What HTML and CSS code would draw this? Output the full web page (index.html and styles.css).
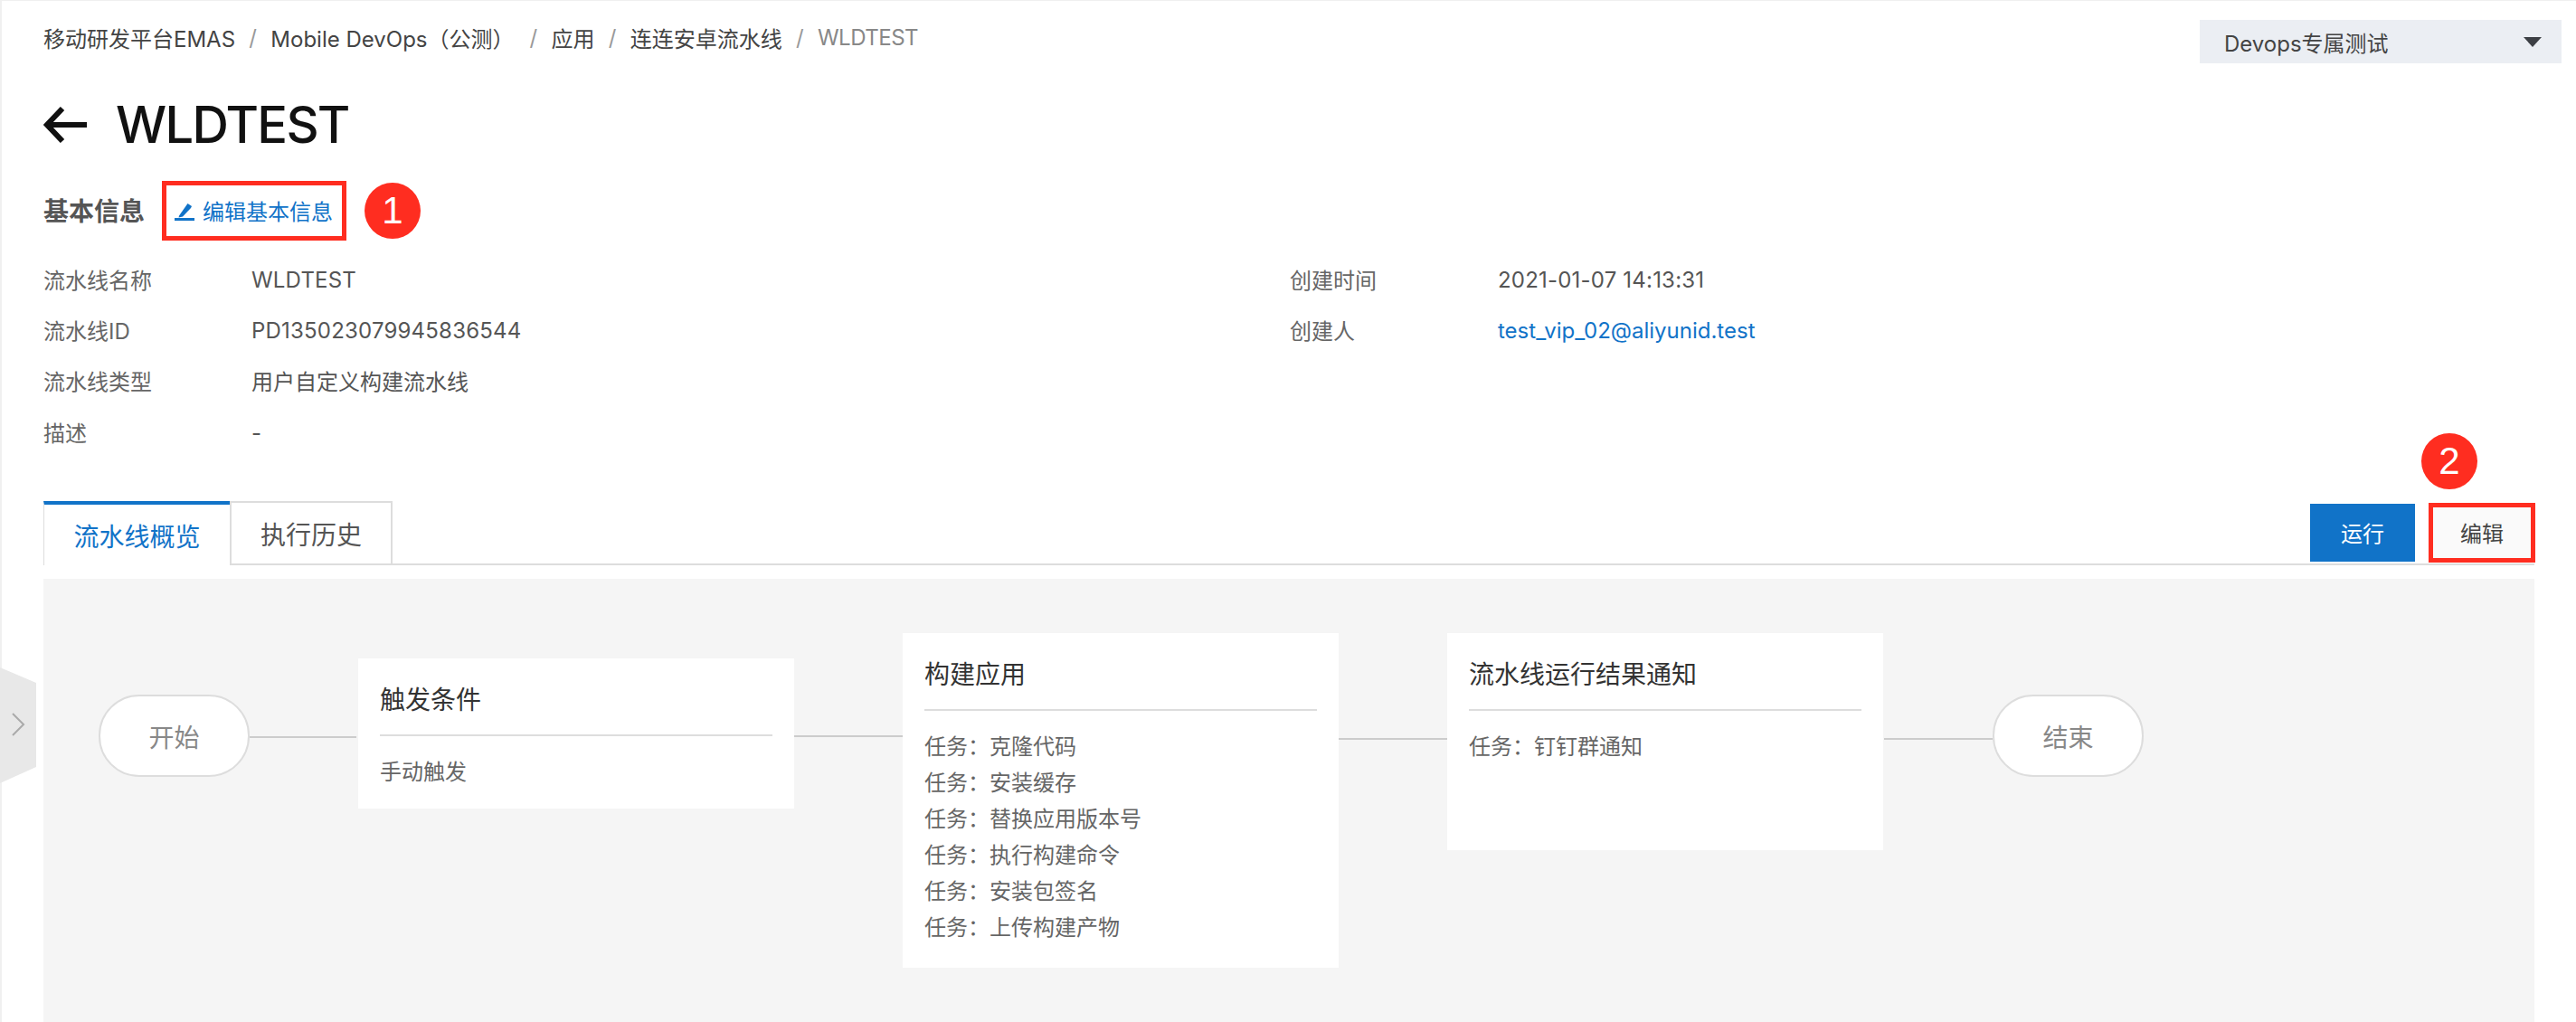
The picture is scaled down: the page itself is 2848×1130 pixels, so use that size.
FILE: index.html
```html
<!DOCTYPE html>
<html lang="zh">
<head>
<meta charset="utf-8">
<title>WLDTEST</title>
<link rel="stylesheet" href="styles.css">
</head>
<body>
<div class="page">
  <div class="side-handle"><svg class="side-chevron" width="16" height="26" viewBox="0 0 16 26"><path d="M2 1l12 12L2 25" fill="none" stroke="#aaa" stroke-width="2"/></svg></div>
  <header class="topbar">
    <nav class="crumbs">
      <span>移动研发平台EMAS</span><i>/</i><span>Mobile DevOps（公测）</span><i class="wide">/</i><span>应用</span><i>/</i><span>连连安卓流水线</span><i>/</i><span class="current">WLDTEST</span>
    </nav>
    <div class="select"><span>Devops专属测试</span><b class="caret"></b></div>
  </header>
  <h1 class="title">
    <svg class="back" width="48" height="40" viewBox="0 0 48 40"><path d="M21 2L4 20l17 18M4 20h44" fill="none" stroke="#111" stroke-width="6"/></svg>
    <span>WLDTEST</span>
  </h1>
  <div class="basic">
    <strong>基本信息</strong>
    <a class="edit-link">
      <svg width="22" height="21" viewBox="0 0 22 21"><path d="M5 15.500L14.500 2 19 5l-1 2-9 9.500-4.500 1z" fill="#1173c8"/><path d="M0 19.500h22" stroke="#1173c8" stroke-width="3"/></svg>
      <span>编辑基本信息</span>
    </a>
    <em class="badge">1</em>
  </div>
  <section class="info">
    <div class="info-col">
      <div class="row"><label>流水线名称</label><span>WLDTEST</span></div>
      <div class="row"><label>流水线ID</label><span>PD135023079945836544</span></div>
      <div class="row"><label>流水线类型</label><span class="cjk">用户自定义构建流水线</span></div>
      <div class="row"><label>描述</label><span>-</span></div>
    </div>
    <div class="info-col">
      <div class="row"><label>创建时间</label><span>2021-01-07 14:13:31</span></div>
      <div class="row"><label>创建人</label><a>test_vip_02@aliyunid.test</a></div>
    </div>
  </section>
  <div class="tabbar">
    <div class="tab active">流水线概览</div>
    <div class="tab">执行历史</div>
    <div class="actions">
      <button class="btn primary">运行</button>
      <button class="btn outlined">编辑<em class="badge badge-over">2</em></button>
    </div>
  </div>
  <section class="canvas">
    <div class="pill pill-start">开始</div>
    <div class="wire w1"></div>
    <article class="card c1">
      <h3>触发条件</h3>
      <ul><li>手动触发</li></ul>
    </article>
    <div class="wire w2"></div>
    <article class="card c2">
      <h3>构建应用</h3>
      <ul>
        <li>任务：克隆代码</li>
        <li>任务：安装缓存</li>
        <li>任务：替换应用版本号</li>
        <li>任务：执行构建命令</li>
        <li>任务：安装包签名</li>
        <li>任务：上传构建产物</li>
      </ul>
    </article>
    <div class="wire w3"></div>
    <article class="card c3">
      <h3>流水线运行结果通知</h3>
      <ul><li>任务：钉钉群通知</li></ul>
    </article>
    <div class="wire w4"></div>
    <div class="pill pill-end">结束</div>
  </section>
</div>
</body>
</html>
```
FILE: styles.css
```css
* { box-sizing: border-box; }
html, body { margin: 0; padding: 0; background: #fff; }
body {
  font-family: Inter, "Noto Sans CJK SC", sans-serif;
  font-size: 24px;
  color: #555;
  overflow: hidden;
}
.page {
  position: relative;
  width: 2848px;
  height: 1130px;
  padding: 22px 16px 0 48px;
  display: flex;
  flex-direction: column;
  overflow: hidden;
  box-shadow: inset 2px 1px 0 #f0f0f0;
}
.side-handle {
  position: absolute;
  left: 0;
  top: 738px;
  width: 40px;
  height: 128px;
  background: #e8e8e8;
  clip-path: polygon(0 0, 100% 17px, 100% 110px, 0 100%);
}
.side-chevron { position: absolute; left: 12px; top: 50px; }
.topbar {
  display: flex;
  justify-content: space-between;
  align-items: flex-start;
  height: 48px;
}
.crumbs {
  display: flex;
  align-items: center;
  height: 38px;
  color: #444;
  white-space: nowrap;
}
.crumbs i { font-style: normal; color: #999; margin: 0 15.300px; }
.crumbs i.wide { margin-left: 17px; }
.crumbs .current { color: #888; letter-spacing: -0.500px; }
.select {
  width: 400px;
  height: 48px;
  background: #ebeef3;
  padding: 0 22px 0 27px;
  display: flex;
  align-items: center;
  justify-content: space-between;
  color: #444;
}
.caret {
  width: 0;
  height: 0;
  border-left: 10px solid transparent;
  border-right: 10px solid transparent;
  border-top: 11px solid #3c3f44;
}
.title {
  margin: 32px 0 0;
  height: 72px;
  display: flex;
  align-items: center;
  gap: 32px;
  font-size: 56px;
  font-weight: 500;
  letter-spacing: -1.700px;
  color: #111;
  line-height: 72px;
}
.back { flex: none; }
.basic {
  margin-top: 26px;
  height: 66px;
  display: flex;
  align-items: center;
}
.basic strong { font-size: 28px; font-weight: 600; color: #555; width: 131px; padding-bottom: 2px; }
.edit-link {
  width: 204px;
  height: 66px;
  border: 5px solid #ff2d20;
  color: #1173c8;
  display: flex;
  align-items: center;
  padding-left: 9px;
  gap: 9px;
}
.edit-link span { padding-bottom: 2px; }
.badge {
  width: 62px;
  height: 62px;
  border-radius: 50%;
  background: #ff2d20;
  color: #fff;
  font-style: normal;
  font-size: 42px;
  font-family: "Liberation Sans", sans-serif;
  display: flex;
  align-items: center;
  justify-content: center;
  margin-left: 20px;
}
.info {
  margin-top: 15px;
  display: flex;
  height: 225px;
}
.info-col { width: 1378px; flex: none; }
.row {
  display: grid;
  grid-template-columns: 230px 1fr;
  height: 56.300px;
  align-items: center;
}
.row span { letter-spacing: 0.200px; }
.row label { color: #666; padding-bottom: 2px; }
.row .cjk { padding-bottom: 2px; letter-spacing: 0; }
.row a { color: #1173c8; }
.tabbar {
  margin: 48px 30px 0 0;
  height: 71px;
  display: flex;
  align-items: stretch;
  border-bottom: 2px solid #ddd;
}
.tab {
  width: 180px;
  font-size: 28px;
  display: flex;
  align-items: center;
  justify-content: center;
  border: 2px solid #ddd;
  border-bottom: 0;
  color: #555;
}
.tab.active {
  width: 206px;
  height: 71px;
  color: #1173c8;
  background: #fff;
  border: 0;
  border-left: 1px solid #ddd;
  border-top: 4px solid #1173c8;
}
.actions {
  margin-left: auto;
  display: flex;
  gap: 15px;
  padding-top: 3px;
  height: 68px;
}
.btn {
  font: inherit;
  height: 64px;
  border: 0;
  padding: 0 0 2px;
  display: flex;
  align-items: center;
  justify-content: center;
}
.primary { width: 116px; background: #1173c8; color: #fff; }
.outlined {
  position: relative;
  width: 118px;
  height: 66px;
  margin: -1px -1px 0 0;
  background: #fafafa;
  border: 5px solid #ff2d20;
  color: #444;
}
.badge-over { position: absolute; left: -13px; top: -82px; margin: 0; }
.canvas {
  position: relative;
  margin: 15px 30px 0 0;
  flex: 1;
  background: #f5f5f5;
}
.pill {
  position: absolute;
  top: 128px;
  width: 167px;
  height: 91px;
  border: 2px solid #ddd;
  border-radius: 45px;
  background: #fff;
  color: #888;
  font-size: 28px;
  display: flex;
  align-items: center;
  justify-content: center;
}
.pill-start { left: 61px; }
.pill-end { left: 2155px; }
.wire { position: absolute; height: 2px; background: #ccc; }
.w1 { left: 228px; top: 174px; width: 118px; }
.w2 { left: 830px; top: 173px; width: 120px; }
.w3 { left: 1432px; top: 176px; width: 120px; }
.w4 { left: 2035px; top: 176px; width: 120px; }
.card {
  position: absolute;
  width: 482px;
  background: #fff;
  padding: 0 24px;
}
.c1 { left: 348px; top: 88px; height: 166px; }
.c2 { left: 950px; top: 60px; height: 370px; }
.c3 { left: 1552px; top: 60px; height: 240px; }
.card h3 {
  margin: 0;
  height: 86px;
  font-size: 28px;
  font-weight: 400;
  line-height: 92px;
  color: #333;
  border-bottom: 2px solid #ddd;
}
.card ul { list-style: none; margin: 0; padding: 20px 0 0; }
.card li { height: 40px; line-height: 40px; color: #666; }
```
